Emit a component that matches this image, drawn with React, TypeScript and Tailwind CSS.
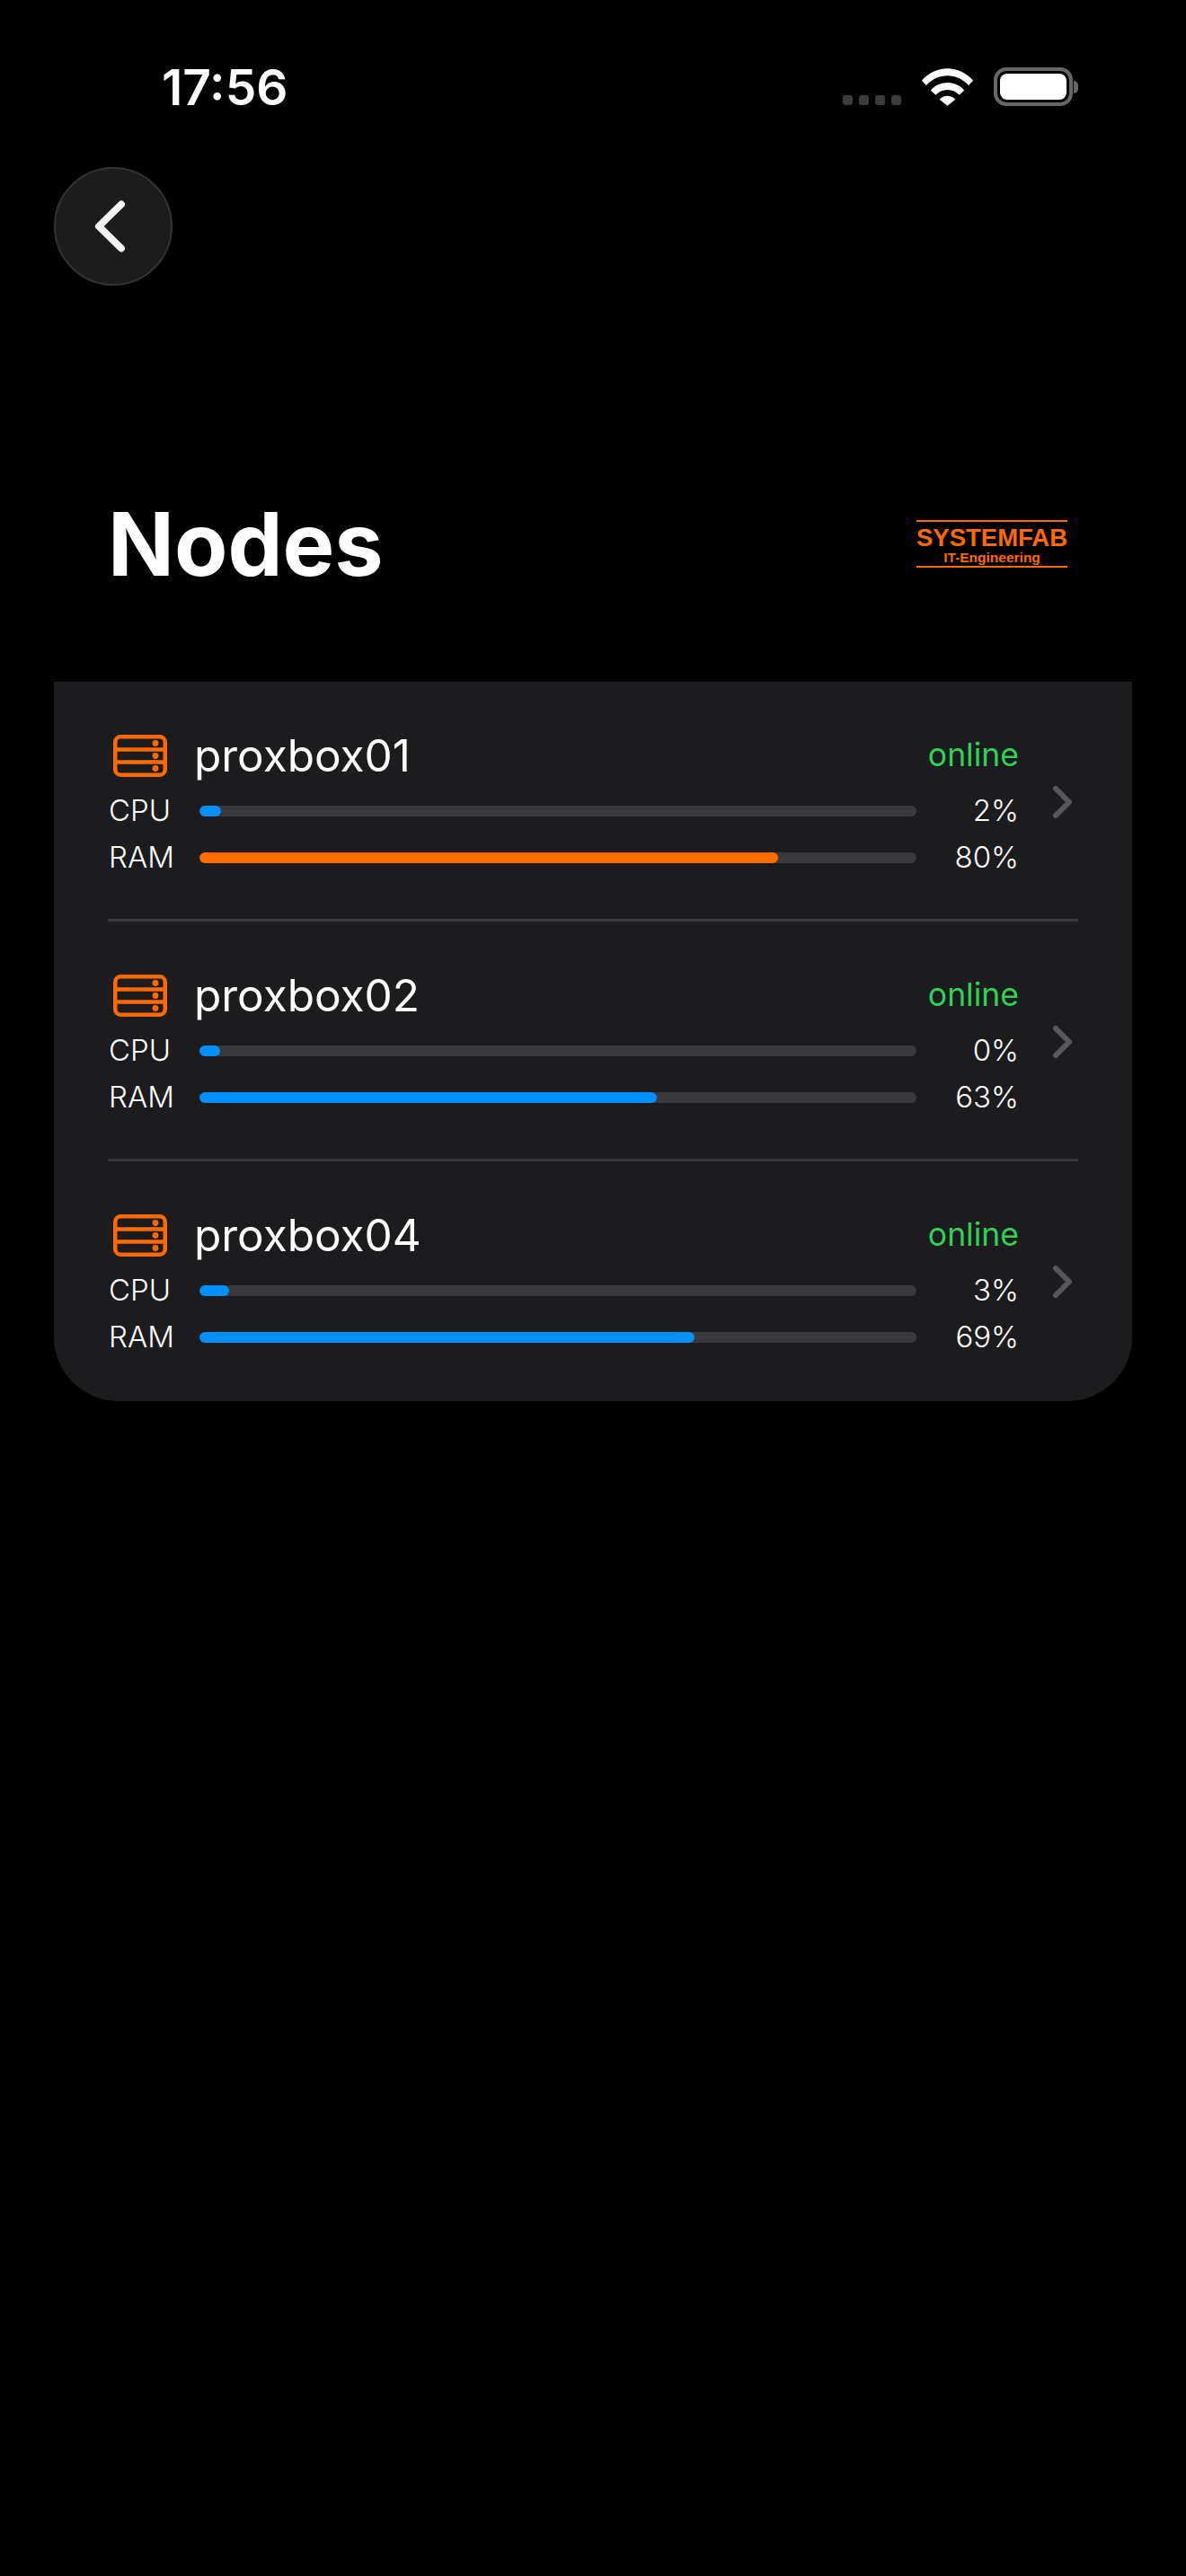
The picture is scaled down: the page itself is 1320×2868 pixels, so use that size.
const nodes = [
  { name: 'proxbox01', cpu: 2, cpuWidth: 24, ram: 80, ramWidth: 644, ramColor: 'bg-[#ff6a00]' },
  { name: 'proxbox02', cpu: 0, cpuWidth: 23, ram: 63, ramWidth: 509, ramColor: 'bg-[#0090ff]' },
  { name: 'proxbox04', cpu: 3, cpuWidth: 33, ram: 69, ramWidth: 551, ramColor: 'bg-[#0090ff]' },
]

function ServerIcon() {
  return (
    <svg width="60" height="47" viewBox="0 0 60 47" fill="none" className="shrink-0">
      <rect x="2.25" y="2.25" width="55.5" height="42.5" rx="6" stroke="#ff6a00" strokeWidth="4.5" />
      <path d="M2 16.5H58M2 30.5H58" stroke="#ff6a00" strokeWidth="4.5" />
      <circle cx="47" cy="9.5" r="3.4" fill="#ff6a00" />
      <circle cx="47" cy="23.5" r="3.4" fill="#ff6a00" />
      <circle cx="47" cy="37.5" r="3.4" fill="#ff6a00" />
    </svg>
  )
}

function Usage({ label, value, width, color }: { label: string; value: number; width: number; color: string }) {
  return (
    <div className="flex h-[52px] items-center text-[33px] text-white">
      <span className="w-[102px] pl-px font-light">{label}</span>
      <div className="h-3 flex-1 overflow-hidden rounded-full bg-[#3a3a3c]">
        <div className={`h-full rounded-full ${color}`} style={{ width }} />
      </div>
      <span className="w-[114px] text-right font-light">{value}%</span>
    </div>
  )
}

export default function App() {
  return (
    <div className="h-[2868px] w-[1320px] overflow-hidden bg-black font-['Inter',sans-serif] text-white">
      {/* Status bar */}
      <div className="flex h-[186px] items-start justify-between pl-[180px] pr-[120px]">
        <span className="mt-[62px] text-[55px] font-semibold leading-[70px]">17:56</span>
        <div className="mt-[75px] flex items-start">
          <div className="mt-[31px] flex gap-[7px]">
            <span className="h-[11px] w-[11px] rounded-[3px] bg-[#3c3c3c]" />
            <span className="h-[11px] w-[11px] rounded-[3px] bg-[#3c3c3c]" />
            <span className="h-[11px] w-[11px] rounded-[3px] bg-[#3c3c3c]" />
            <span className="h-[11px] w-[11px] rounded-[3px] bg-[#3c3c3c]" />
          </div>
          <svg width="57" height="42" viewBox="0 0 58 42" className="ml-[23px] mt-px" fill="white">
            <path d="M0 13.5C7.5 5 18 0 29 0s21.500 5 29 13.500l-5 5.500C46.500 11.800 38 8 29 8s-17.500 3.800-24 11z" />
            <path d="M10 24.500C15 19 21.800 16 29 16s14 3 19 8.500l-5.500 5.500C39 26.200 34 24 29 24s-10 2.200-13.500 6z" />
            <path d="M20 35c2.300-2.500 5.500-4 9-4s6.700 1.500 9 4l-9 7z" />
          </svg>
          <div className="ml-[23px] flex items-center">
            <div className="h-[43px] w-[88px] rounded-[14px] border-[4px] border-[#666] p-[3px]">
              <div className="h-full w-full rounded-[8px] bg-white" />
            </div>
            <div className="ml-[1px] h-[14px] w-[5px] rounded-r-full bg-[#666]" />
          </div>
        </div>
      </div>

      {/* Back button */}
      <div className="px-[60px]">
        <div className="flex h-[132px] w-[132px] items-center justify-center rounded-full border-2 border-[#333] bg-[#1c1c1c]">
          <svg width="40" height="62" viewBox="0 0 40 62" fill="none" className="mr-[8px]">
            <path d="M33 6.500L8 31L33 55.500" stroke="#f2f2f2" strokeWidth="8" strokeLinecap="round" strokeLinejoin="round" />
          </svg>
        </div>
      </div>

      {/* Header */}
      <div className="flex h-[441px] items-start justify-between pl-[120px] pr-[132px]">
        <h1 className="mt-[226px] text-[97px] font-bold leading-[124px]">Nodes</h1>
        <div className="mt-[261px] w-[168px] border-y-2 border-[#ff6a00] pb-[2px] text-center font-['Liberation_Sans',sans-serif] font-bold text-[#ff6a00]">
          <div className="mt-[3px] whitespace-nowrap text-[27.5px] leading-[30px]">SYSTEMFAB</div>
          <div className="whitespace-nowrap text-[15.500px] leading-[14px]">IT-Engineering</div>
        </div>
      </div>

      {/* Node list */}
      <div className="mx-[60px] rounded-b-[72px] bg-[#1c1c1e] pb-[45px]">
        {nodes.map((node, i) => (
          <div key={node.name} className="mx-[60px]">
            {i > 0 && <div className="mt-[42px] h-[3px] bg-[#38383a]" />}
            <div className="flex items-start pt-[56px]">
              <div className="w-[1014px] shrink-0">
                <div className="flex h-[52px] items-center">
                  <div className="ml-[6px]"><ServerIcon /></div>
                  <span className="ml-[30px] flex-1 text-[49.5px] leading-[52px]">{node.name}</span>
                  <span className="text-[35.5px] text-[#30d158]">online</span>
                </div>
                <div className="pt-[10px]">
                  <Usage label="CPU" value={node.cpu} width={node.cpuWidth} color="bg-[#0090ff]" />
                  <Usage label="RAM" value={node.ram} width={node.ramWidth} color={node.ramColor} />
                </div>
              </div>
              <svg width="21" height="36" viewBox="0 0 21 36" fill="none" className="ml-[38px] mt-[60px]">
                <path d="M3 3L18 18L3 33" stroke="#58585a" strokeWidth="6" strokeLinecap="round" strokeLinejoin="round" />
              </svg>
            </div>
          </div>
        ))}
      </div>
    </div>
  )
}
